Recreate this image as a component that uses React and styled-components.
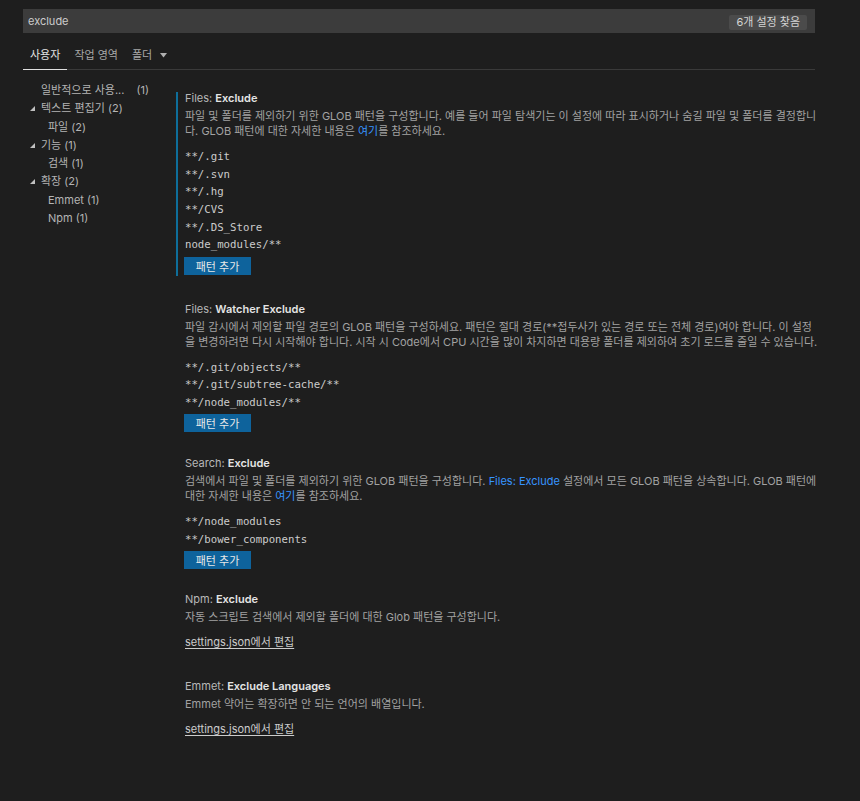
import styled, { createGlobalStyle } from "styled-components"

const GlobalStyle = createGlobalStyle`
html, body {
  margin: 0;
  padding: 0;
  background: #1e1e1e;
}
body {
  font-family: "Inter", "Noto Sans CJK KR", sans-serif;
  font-size: 11px;
  color: #cccccc;
}
`
const Page = styled.div`
  width: 860px;
  min-height: 801px;
  background: #1e1e1e;
  padding: 9px 0 0 23px;
  box-sizing: border-box;
`
const Header = styled.div`
  width: 792px;
`
const SearchBar = styled.div`
  height: 24px;
  background: #3c3c3c;
  display: flex;
  align-items: center;
  justify-content: space-between;
  padding: 0 8px 0 5px;
  box-sizing: border-box;
`
const SearchText = styled.span`
  color: #cccccc;
  font-size: 11px;
`
const Badge = styled.span`
  background: #4b4b4b;
  color: #d4d4d4;
  font-size: 11px;
  height: 15px;
  line-height: 15px;
  padding: 0 7px;
  border-radius: 2px;
  margin-top: 2px;
`
const Tabs = styled.div`
  display: flex;
  border-bottom: 1px solid #3a3a3a;
`
const Tab = styled.div`
  padding: 14px 7px 6px;
  line-height: 16px;
  font-size: 11px;
  color: ${p => (p.$active ? "#e2e2e2" : "#a8a8a8")};
  border-bottom: 1px solid ${p => (p.$active ? "#e0e0e0" : "transparent")};
  margin-bottom: -1px;
  display: flex;
  align-items: center;
  gap: 8px;
`
const Body = styled.div`
  display: flex;
`
const Tree = styled.div`
  width: 153px;
  padding-top: 11px;
  flex-shrink: 0;
`
const TreeRow = styled.div`
  height: 18.3px;
  line-height: 18.3px;
  display: flex;
  align-items: center;
  padding-left: ${p => p.$indent}px;
  color: #b4b4b4;
  white-space: nowrap;
`
const Twist = styled.svg`
  width: 5px;
  height: 5px;
  margin-left: -11px;
  margin-right: 6px;
  fill: #c0c0c0;
`
const Count = styled.span`
  margin-left: 12px;
`
const Content = styled.div`
  flex: 1;
  padding-top: 22px;
`
const Section = styled.div`
  border-left: 2px solid ${p => (p.$focused ? "#0e6e9a" : "transparent")};
  padding: 0 0 1px 7px;
  margin-bottom: ${p => p.$gap || 25}px;
`
const Title = styled.div`
  line-height: 12px;
  color: #b8b8b8;
  font-size: 11px;
  b {
    color: #e4e4e4;
    font-weight: 600;
  }
`
const Desc = styled.div`
  margin-top: 5px;
  line-height: 15px;
  color: #a2a2a2;
  width: 634px;
`
const Link = styled.span`
  color: #3794ff;
`
const List = styled.div`
  margin-top: 9px;
`
const Item = styled.div`
  font-family: "DejaVu Sans Mono", "Liberation Mono", monospace;
  font-size: 10.7px;
  height: 17.7px;
  line-height: 17.7px;
  color: #cccccc;
`
const AddButton = styled.button`
  display: block;
  margin: 2.5px 0 0 -1px;
  width: 67px;
  height: 18px;
  background: #0e639c;
  border: none;
  color: #e8e8e8;
  font-family: "Inter", "Noto Sans CJK KR", sans-serif;
  font-size: 11px;
  padding: 0;
`
const EditLink = styled.div`
  margin-top: 10px;
  margin-bottom: 4px;
  line-height: 15px;
  color: #cccccc;
  text-decoration: underline;
  text-underline-offset: 2px;
`

const tree = [
  { label: "일반적으로 사용...", count: "(1)", indent: 18 },
  { label: "텍스트 편집기 (2)", indent: 18, open: true },
  { label: "파일 (2)", indent: 25 },
  { label: "기능 (1)", indent: 18, open: true },
  { label: "검색 (1)", indent: 25 },
  { label: "확장 (2)", indent: 18, open: true },
  { label: "Emmet (1)", indent: 25 },
  { label: "Npm (1)", indent: 25 },
]

const Caret = () => (
  <Twist viewBox="0 0 5 5">
    <polygon points="5,0 5,5 0,5" />
  </Twist>
)

const App = () => {
  return (
    <Page>
      <GlobalStyle />
      <Header>
        <SearchBar>
          <SearchText>exclude</SearchText>
          <Badge>6개 설정 찾음</Badge>
        </SearchBar>
        <Tabs>
          <Tab $active>사용자</Tab>
          <Tab>작업 영역</Tab>
          <Tab>
            폴더
            <svg width="7" height="5" viewBox="0 0 7 5">
              <polygon points="0,0 7,0 3.5,4.5" fill="#b0b0b0" />
            </svg>
          </Tab>
        </Tabs>
      </Header>
      <Body>
        <Tree>
          {tree.map(t => (
            <TreeRow key={t.label} $indent={t.indent}>
              {t.open && <Caret />}
              {t.label}
              {t.count && <Count>{t.count}</Count>}
            </TreeRow>
          ))}
        </Tree>
        <Content>
          <Section $focused $gap={27}>
            <Title>
              Files: <b>Exclude</b>
            </Title>
            <Desc>
              파일 및 폴더를 제외하기 위한 GLOB 패턴을 구성합니다. 예를 들어 파일 탐색기는 이 설정에 따라 표시하거나 숨길 파일 및 폴더를 결정합니다. GLOB 패턴에 대한 자세한 내용은 <Link>여기</Link>를 참조하세요.
            </Desc>
            <List>
              <Item>**/.git</Item>
              <Item>**/.svn</Item>
              <Item>**/.hg</Item>
              <Item>**/CVS</Item>
              <Item>**/.DS_Store</Item>
              <Item>node_modules/**</Item>
            </List>
            <AddButton>패턴 추가</AddButton>
          </Section>
          <Section $gap={24}>
            <Title>
              Files: <b>Watcher Exclude</b>
            </Title>
            <Desc>
              파일 감시에서 제외할 파일 경로의 GLOB 패턴을 구성하세요. 패턴은 절대 경로(**접두사가 있는 경로 또는 전체 경로)여야 합니다. 이 설정을 변경하려면 다시 시작해야 합니다. 시작 시 Code에서 CPU 시간을 많이 차지하면 대용량 폴더를 제외하여 초기 로드를 줄일 수 있습니다.
            </Desc>
            <List>
              <Item>**/.git/objects/**</Item>
              <Item>**/.git/subtree-cache/**</Item>
              <Item>**/node_modules/**</Item>
            </List>
            <AddButton>패턴 추가</AddButton>
          </Section>
          <Section $gap={23}>
            <Title>
              Search: <b>Exclude</b>
            </Title>
            <Desc>
              검색에서 파일 및 폴더를 제외하기 위한 GLOB 패턴을 구성합니다. <Link>Files: Exclude</Link> 설정에서 모든 GLOB 패턴을 상속합니다. GLOB 패턴에 대한 자세한 내용은 <Link>여기</Link>를 참조하세요.
            </Desc>
            <List>
              <Item>**/node_modules</Item>
              <Item>**/bower_components</Item>
            </List>
            <AddButton>패턴 추가</AddButton>
          </Section>
          <Section $gap={25}>
            <Title>
              Npm: <b>Exclude</b>
            </Title>
            <Desc>자동 스크립트 검색에서 제외할 폴더에 대한 Glob 패턴을 구성합니다.</Desc>
            <EditLink>settings.json에서 편집</EditLink>
          </Section>
          <Section>
            <Title>
              Emmet: <b>Exclude Languages</b>
            </Title>
            <Desc>Emmet 약어는 확장하면 안 되는 언어의 배열입니다.</Desc>
            <EditLink>settings.json에서 편집</EditLink>
          </Section>
        </Content>
      </Body>
    </Page>
  )
}
export default App
